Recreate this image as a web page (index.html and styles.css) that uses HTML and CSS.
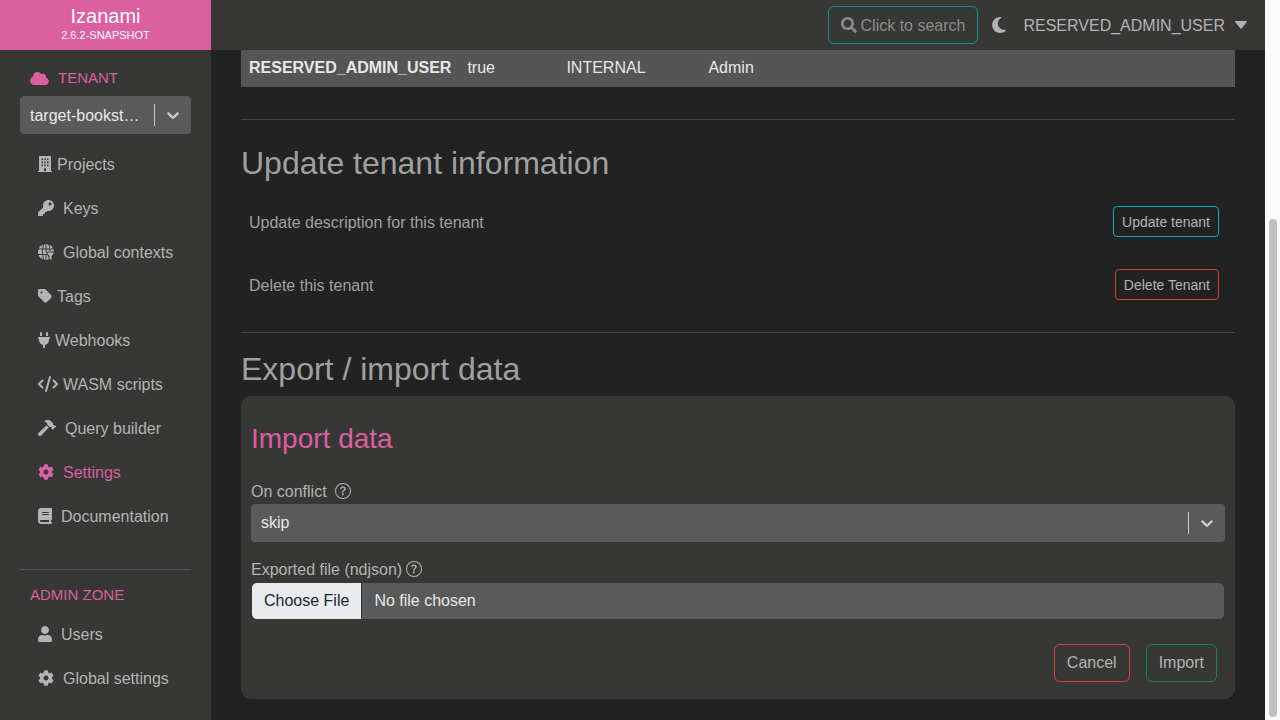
FILE: index.html
```html
<!DOCTYPE html>
<html lang="en">
<head>
<meta charset="utf-8">
<title>Izanami</title>
<link rel="stylesheet" href="styles.css">
</head>
<body>
<svg class="defs" aria-hidden="true">
  <symbol id="gear" viewBox="0 0 512 512"><path d="M487.4 315.700l-42.600-24.600c4.300-23.200 4.300-47 0-70.200l42.600-24.600c4.900-2.800 7.100-8.600 5.500-14-11.100-35.600-30-67.800-54.700-94.600-3.800-4.100-10-5.100-14.800-2.300L380.800 110c-17.900-15.400-38.500-27.300-60.800-35.100V25.800c0-5.600-3.900-10.500-9.400-11.700-36.700-8.200-74.300-7.800-109.200 0-5.500 1.200-9.400 6.100-9.400 11.700V75c-22.200 7.900-42.800 19.800-60.800 35.100L88.700 85.500c-4.900-2.800-11-1.900-14.800 2.300-24.700 26.700-43.600 58.900-54.700 94.600-1.700 5.400.6 11.200 5.500 14L67.300 221c-4.300 23.200-4.300 47 0 70.200l-42.600 24.600c-4.900 2.800-7.100 8.600-5.500 14 11.100 35.600 30 67.800 54.700 94.600 3.800 4.100 10 5.100 14.800 2.300l42.600-24.600c17.900 15.400 38.500 27.300 60.800 35.100v49.200c0 5.600 3.900 10.500 9.400 11.700 36.700 8.200 74.300 7.800 109.200 0 5.500-1.200 9.400-6.100 9.400-11.700v-49.200c22.200-7.900 42.800-19.800 60.800-35.100l42.600 24.600c4.900 2.800 11 1.900 14.800-2.300 24.700-26.700 43.600-58.900 54.700-94.600 1.500-5.500-.7-11.300-5.600-14.100zM256 336c-44.100 0-80-35.900-80-80s35.900-80 80-80 80 35.900 80 80-35.900 80-80 80z"/></symbol>
  <symbol id="help" viewBox="0 0 16 16"><path d="M8 15A7 7 0 1 1 8 1a7 7 0 0 1 0 14m0 1A8 8 0 1 0 8 0a8 8 0 0 0 0 16"/><path d="M5.255 5.786a.237.237 0 0 0 .241.247h.825c.138 0 .248-.113.266-.25.09-.656.54-1.134 1.342-1.134.686 0 1.314.343 1.314 1.168 0 .635-.374.927-.965 1.371-.673.489-1.206 1.060-1.168 1.987l.003.217a.25.25 0 0 0 .25.246h.811a.25.25 0 0 0 .25-.25v-.105c0-.718.273-.927 1.010-1.486.609-.463 1.244-.977 1.244-2.056 0-1.511-1.276-2.241-2.673-2.241-1.267 0-2.655.59-2.750 2.286m1.557 5.763c0 .533.425.927 1.010.927.609 0 1.028-.394 1.028-.927 0-.552-.42-.940-1.029-.940-.584 0-1.009.388-1.009.940"/></symbol>
  <symbol id="chevron" viewBox="0 0 20 20"><path d="M4.516 7.548c.436-.446 1.043-.481 1.576 0L10 11.295l3.908-3.747c.533-.481 1.141-.446 1.574 0 .436.445.408 1.197 0 1.615-.406.418-4.695 4.502-4.695 4.502a1.095 1.095 0 0 1-1.576 0S4.924 9.581 4.516 9.163s-.436-1.170 0-1.615z"/></symbol>
</svg>
<div class="app">
  <aside class="sidebar">
    <a class="brand" href="#"><span class="brand-name">Izanami</span><span class="brand-version">2.6.2-SNAPSHOT</span></a>
    <nav class="side-nav">
      <label class="zone" for="tenant"><svg class="cloud" viewBox="0 0 640 512"><path d="M537.600 226.600c4.100-10.700 6.400-22.400 6.400-34.600 0-53-43-96-96-96-19.700 0-38.100 6-53.300 16.200C367 64.200 315.300 32 256 32c-88.400 0-160 71.600-160 160 0 2.700.1 5.400.2 8.100C40.200 219.800 0 273.200 0 336c0 79.500 64.500 144 144 144h368c70.700 0 128-57.300 128-128 0-61.900-44-113.600-102.400-125.400z"/></svg>TENANT</label>
      <div class="select">
        <select id="tenant"><option>target-bookst…</option></select>
        <span class="select-mark"><svg viewBox="0 0 20 20"><use href="#chevron"/></svg></span>
      </div>
      <ul class="menu">
        <li><a class="tight" href="#"><svg class="w14" viewBox="0 0 448 512"><path fill-rule="evenodd" d="M436 480h-20V24c0-13.300-10.700-24-24-24H56C42.700 0 32 10.700 32 24v456H12c-6.600 0-12 5.400-12 12v20h448v-20c0-6.600-5.400-12-12-12zM112 80h48v56h-48zM200 80h48v56h-48zM288 80h48v56h-48zM112 176h48v56h-48zM200 176h48v56h-48zM288 176h48v56h-48zM112 272h48v56h-48zM200 272h48v56h-48zM288 272h48v56h-48zM192 392h64v88h-64z"/></svg>Projects</a></li>
        <li><a href="#"><svg class="w16" viewBox="0 0 512 512"><path d="M512 176C512 273.200 433.200 352 336 352c-11.200 0-22.200-1.100-32.800-3.100l-24 27A24 24 0 0 1 261.200 384H224v40c0 13.300-10.700 24-24 24h-40v40c0 13.300-10.700 24-24 24H24c-13.300 0-24-10.700-24-24v-78.100c0-6.300 2.500-12.400 7-16.900l161.800-161.800C163.100 213.800 160 195.300 160 176 160 78.800 238.800 0 336 0 433.500 0 512 78.500 512 176zM336 128c0 26.500 21.500 48 48 48s48-21.500 48-48-21.500-48-48-48-48 21.500-48 48z"/></svg>Keys</a></li>
        <li><a href="#"><svg class="w16 globe" viewBox="0 0 16 16"><circle cx="8" cy="8" r="8"/><path class="cut" d="M0 5h16M0 10.500h9M8 0v7.500M8 10v6M5.500 0Q3 8 5.500 16M10.500 0q1.500 3 1.500 7"/><path class="knock" d="M7.500 7.500H16V16H10.500V13z"/><path d="M9 8.500h7l-2.400 3.500v4l-2.200-1.500V12z"/></svg>Global contexts</a></li>
        <li><a class="tight" href="#"><svg class="w14" viewBox="0 0 448 512"><path d="M0 80V229.500c0 17 6.700 33.300 18.700 45.300l176 176c25 25 65.500 25 90.500 0L418.700 317.300c25-25 25-65.500 0-90.500l-176-176c-12-12-28.300-18.700-45.300-18.700H48C21.500 32 0 53.500 0 80zm112 32a32 32 0 1 1 0 64 32 32 0 1 1 0-64z"/></svg>Tags</a></li>
        <li><a class="tight" href="#"><svg class="w12" viewBox="0 0 384 512"><path d="M96 0C78.300 0 64 14.300 64 32v96h64V32c0-17.700-14.300-32-32-32zM288 0c-17.700 0-32 14.300-32 32v96h64V32c0-17.700-14.300-32-32-32zM32 160c-17.700 0-32 14.300-32 32s14.300 32 32 32v32c0 77.400 55 142 128 156.800V480c0 17.700 14.300 32 32 32s32-14.300 32-32V412.800C297 398 352 333.400 352 256V224c17.700 0 32-14.300 32-32s-14.300-32-32-32H32z"/></svg>Webhooks</a></li>
        <li><a class="tight" href="#"><svg class="w20" viewBox="0 0 640 512"><path d="M392.800 1.200c-17-4.900-34.700 5-39.600 22l-128 448c-4.900 17 5 34.700 22 39.600s34.700-5 39.600-22l128-448c4.900-17-5-34.700-22-39.600zm80.600 120.100c-12.500 12.500-12.500 32.800 0 45.300L562.700 256l-89.400 89.400c-12.500 12.500-12.500 32.800 0 45.300s32.800 12.500 45.300 0l112-112c12.500-12.500 12.500-32.800 0-45.300l-112-112c-12.500-12.500-32.800-12.500-45.300 0zm-306.700 0c-12.500-12.500-32.800-12.500-45.300 0l-112 112c-12.500 12.500-12.500 32.800 0 45.300l112 112c12.500 12.500 32.800 12.500 45.300 0s12.500-32.800 0-45.300L77.300 256l89.400-89.400c12.500-12.500 12.500-32.800 0-45.300z"/></svg>WASM scripts</a></li>
        <li><a href="#"><svg class="w18" viewBox="0 0 576 512"><path d="M571.300 193.900l-22.600-22.600c-6.300-6.300-16.400-6.300-22.600 0l-11.300 11.300-28.900-28.900c5.600-21.300.4-44.900-16.400-61.600l-45.200-45.200c-62.500-62.500-163.800-62.500-226.300 0l90.500 45.200v18.800c0 17 6.700 33.200 18.800 45.200l49.100 49.100c16.700 16.700 40.300 22 61.600 16.400l28.900 28.900-11.300 11.300c-6.300 6.300-6.300 16.400 0 22.600l22.600 22.600c6.300 6.300 16.400 6.300 22.600 0l90.500-90.500c6.300-6.200 6.300-16.300 0-22.600zM284.600 178.700c-3.700-3.700-6.800-7.800-9.900-11.900L19.600 405c-25.500 23.800-26.200 64.100-1.500 88.900s65.100 24 88.900-1.500l238.200-255.100c-4-2.900-7.900-5.900-11.500-9.400l-49.100-49.200z"/></svg>Query builder</a></li>
        <li><a class="active" href="#"><svg class="w16"><use href="#gear"/></svg>Settings</a></li>
        <li><a href="#"><svg class="w14" viewBox="0 0 448 512"><path d="M96 0C43 0 0 43 0 96V416c0 53 43 96 96 96H384h32c17.700 0 32-14.300 32-32s-14.300-32-32-32V384c17.700 0 32-14.300 32-32V32c0-17.700-14.300-32-32-32H384 96zm0 384H352v64H96c-17.700 0-32-14.300-32-32s14.300-32 32-32zm32-240c0-8.800 7.200-16 16-16H336c8.800 0 16 7.200 16 16s-7.200 16-16 16H144c-8.800 0-16-7.200-16-16zm16 48H336c8.800 0 16 7.200 16 16s-7.200 16-16 16H144c-8.800 0-16-7.200-16-16s7.200-16 16-16z"/></svg>Documentation</a></li>
      </ul>
      <hr>
      <h2 class="zone">ADMIN ZONE</h2>
      <ul class="menu admin">
        <li><a href="#"><svg class="w14" viewBox="0 0 448 512"><path d="M224 256c70.700 0 128-57.300 128-128S294.700 0 224 0 96 57.300 96 128s57.300 128 128 128zm89.600 32h-16.700c-22.200 10.200-46.900 16-72.900 16s-50.600-5.800-72.900-16h-16.700C60.200 288 0 348.200 0 422.400V464c0 26.500 21.500 48 48 48h352c26.500 0 48-21.500 48-48v-41.600c0-74.200-60.200-134.400-134.400-134.400z"/></svg>Users</a></li>
        <li><a href="#"><svg class="w16"><use href="#gear"/></svg>Global settings</a></li>
      </ul>
    </nav>
  </aside>
  <div class="page">
    <header class="topbar">
      <button class="btn search" type="button"><svg class="w16" viewBox="0 0 512 512"><path d="M505 442.700L405.300 343c-4.500-4.500-10.600-7-17-7H372c27.600-35.300 44-79.700 44-128C416 93.100 322.900 0 208 0S0 93.100 0 208s93.100 208 208 208c48.300 0 92.700-16.400 128-44v16.300c0 6.400 2.500 12.500 7 17l99.700 99.700c9.400 9.400 24.600 9.400 33.900 0l28.300-28.300c9.400-9.400 9.400-24.600.1-34zM208 336c-70.700 0-128-57.200-128-128 0-70.700 57.200-128 128-128 70.700 0 128 57.200 128 128 0 70.700-57.200 128-128 128z"/></svg>Click to search</button>
      <button class="plain moon" type="button" aria-label="Toggle theme"><svg class="w14" viewBox="0 32 384 448"><path d="M223.500 32C100 32 0 132.300 0 256S100 480 223.500 480c60.600 0 115.500-24.200 155.800-63.400c5-4.900 6.300-12.500 3.100-18.700s-10.100-9.700-17-8.500c-9.800 1.700-19.800 2.600-30.100 2.600c-96.900 0-175.500-78.800-175.500-176c0-65.800 36-123.100 89.300-153.300c6.100-3.500 9.200-10.500 7.700-17.300s-7.300-11.900-14.300-12.500c-6.300-.5-12.600-.8-19-.8z"/></svg></button>
      <button class="plain user" type="button">RESERVED_ADMIN_USER<svg class="caret" viewBox="0 0 12 8"><path d="M1 0h10q1.500 0 .6 1.200L7 7q-1 1.200-2 0L.4 1.200Q-.5 0 1 0z"/></svg></button>
    </header>
    <main>
      <table>
        <tbody><tr><th scope="row">RESERVED_ADMIN_USER</th><td class="c-admin">true</td><td class="c-type">INTERNAL</td><td>Admin</td></tr></tbody>
      </table>
      <hr>
      <section class="tenant-info">
        <h2>Update tenant information</h2>
        <div class="row"><span>Update description for this tenant</span><button class="btn small info" type="button">Update tenant</button></div>
        <div class="row"><span>Delete this tenant</span><button class="btn small danger" type="button">Delete Tenant</button></div>
      </section>
      <hr>
      <section class="data">
        <h2>Export / import data</h2>
        <form class="card">
          <h3>Import data</h3>
          <div class="label wide"><label for="conflict">On conflict</label><svg class="w16"><use href="#help"/></svg></div>
          <div class="select">
            <select id="conflict"><option>skip</option></select>
            <span class="select-mark"><svg viewBox="0 0 20 20"><use href="#chevron"/></svg></span>
          </div>
          <div class="label second"><label for="file">Exported file (ndjson)</label><svg class="w16"><use href="#help"/></svg></div>
          <input class="file" id="file" type="file">
          <div class="actions"><button class="btn danger" type="button">Cancel</button><button class="btn success" type="button">Import</button></div>
        </form>
      </section>
    </main>
  </div>
  <div class="scroll-track"><div class="scroll-thumb"></div></div>
</div>
</body>
</html>
```
FILE: styles.css
```css
* { box-sizing: border-box; }
body {
  margin: 0;
  background: #222;
  color: #a0a0a0;
  font: 16px/24px "Liberation Sans", Arial, sans-serif;
}
h2, h3, ul { margin: 0; padding: 0; font-weight: 400; }
ul { list-style: none; }
a { color: inherit; text-decoration: none; }
button, select, input { font: inherit; color: inherit; }
svg { fill: currentColor; flex: none; }
.defs { display: none; }
.w12 { width: 12px; height: 16px; }
.w14 { width: 14px; height: 16px; }
.w16 { width: 16px; height: 16px; }
.w18 { width: 18px; height: 16px; }
.w20 { width: 20px; height: 16px; }
hr { margin: 0; border: 0; border-top: 1px solid #444; }

.app { display: flex; min-height: 100vh; }
.sidebar { width: 211px; flex: none; background: #373735; color: #b5b3b3; }
.brand {
  display: flex;
  flex-direction: column;
  align-items: center;
  height: 50px;
  padding-top: 4px;
  background: #dc5f9f;
  color: #fff;
}
.brand-name { font-size: 20px; line-height: 24px; }
.brand-version { font-size: 11px; line-height: 14px; }
.side-nav { padding: 16px 20px 0; }
.zone {
  display: flex;
  align-items: center;
  gap: 9px;
  height: 24px;
  margin-left: 10px;
  color: #dc5f9f;
  font-size: 15px;
}
.cloud { width: 19px; height: 15px; }
.select { position: relative; color: #e8e8e8; }
.side-nav .select { margin-top: 6px; }
.select select {
  display: block;
  width: 100%;
  height: 38px;
  padding: 2px 48px 0 10px;
  border: 0;
  border-radius: 4px;
  background: #5a5a5a;
  appearance: none;
}
.select-mark {
  position: absolute;
  top: 8px;
  right: 0;
  bottom: 8px;
  width: 37px;
  border-left: 1px solid #ccc;
  color: #ccc;
  display: flex;
  align-items: center;
  justify-content: center;
  pointer-events: none;
}
.select-mark svg { width: 20px; height: 20px; }
.menu { margin: 8px 0 0 18px; }
.menu a { display: flex; align-items: center; gap: 9px; height: 44px; padding-top: 2px; }
.menu svg { margin-bottom: 2px; }
.menu a.tight { gap: 5px; }
.menu a.active { color: #dc5f9f; }
.globe .cut { fill: none; stroke: #373735; }
.globe .knock { fill: #373735; }
.side-nav hr { margin: 31px 0 13px; border-color: #555; }
.menu.admin { margin-top: 5px; }

.page { flex: 1; min-width: 0; }
.topbar {
  display: flex;
  align-items: center;
  justify-content: flex-end;
  height: 50px;
  padding-right: 18px;
  background: #373735;
  color: #b5b3b3;
}
.btn {
  display: inline-flex;
  align-items: center;
  height: 38px;
  padding: 2px 12px 0;
  border: 1px solid;
  border-radius: 6px;
  background: none;
  color: #b5b3b3;
}
.search { gap: 4px; border-color: #17899a; color: #8d8b8b; }
.search svg { margin-bottom: 2px; }
.plain { display: flex; align-items: center; padding: 0; border: 0; background: none; }
.moon { margin: 0 17px 0 14px; }
.user { gap: 10px; padding-top: 2px; }
.user svg { margin-bottom: 2px; }
.caret { width: 12px; height: 8px; }

main { padding: 0 30px 21px; }
table { width: 100%; margin-bottom: 32px; border-collapse: collapse; background: #555; color: #e8e8e8; }
th, td { height: 37px; padding: 0 8px 2px; text-align: left; }
th { width: 218px; }
.c-admin { width: 99px; }
.c-type { width: 142px; }
main h2 { font-size: 32px; line-height: 38px; }
.tenant-info { padding: 24px 0 16px; }
.row { display: flex; align-items: center; justify-content: space-between; padding: 16px 16px 16px 8px; }
.row span { padding-top: 2px; }
.tenant-info h2 { margin-bottom: 8px; }
.small { height: 31px; padding: 0 8px; border-radius: 4px; font-size: 14px; }
.info { border-color: #10a9bf; }
.danger { border-color: #cf433f; }
.success { border-color: #1d8355; }
.data { padding-top: 17px; }
.card { margin-top: 8px; padding: 26px 10px 17px; border-radius: 10px; background: #373735; color: #b5b3b3; }
h3 { color: #dc5f9f; font-size: 28px; line-height: 34px; }
.label { display: flex; align-items: center; gap: 4px; margin-top: 24px; }
.label.wide { gap: 8px; }
.label.second { margin-top: 16px; }
.label svg { margin-bottom: 2px; }
.card .select select { padding-top: 0; }
.file {
  display: block;
  width: 100%;
  height: 38px;
  border: 1px solid #373735;
  border-radius: 6px;
  background: #5a5a5a;
  color: #e8e8e8;
  line-height: 36px;
}
.file::file-selector-button {
  height: 36px;
  margin: 0 12px 0 0;
  padding: 0 12px;
  border: 0;
  border-right: 1px solid #373735;
  background: #e9ecef;
  color: #212529;
  font: inherit;
}
.actions { display: flex; justify-content: flex-end; gap: 16px; margin-top: 24px; padding-right: 8px; }
.actions .btn { padding-top: 0; }

.scroll-track { display: flex; flex-direction: column; justify-content: flex-end; width: 15px; flex: none; padding: 0 3px 3px 4px; background: #fafafa; }
.scroll-thumb { flex: 0 0 69.5%; border-radius: 4px; background: #c1c1c1; }
```
